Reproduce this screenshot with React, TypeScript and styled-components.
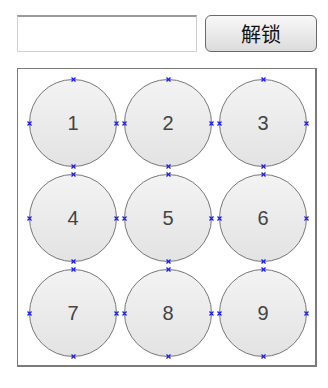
import React from 'react';
import styled, { createGlobalStyle } from 'styled-components';

const GlobalStyle = createGlobalStyle`
	html, body {
		margin: 0;
		padding: 0;
		background: #ffffff;
		font-family: "Liberation Sans", "Noto Sans CJK SC", sans-serif;
	}
`;

const Page = styled.div`
	padding: 15px 0 0 17px;
	width: 300px;
`;

const Toolbar = styled.div`
	display: flex;
	align-items: center;
	gap: 8px;
`;

const PasswordInput = styled.input`
	box-sizing: border-box;
	width: 180px;
	height: 37px;
	margin: 0;
	border: 1px solid #cfcfcf;
	border-top: 2px solid #9a9a9a;
	outline: none;
	background: #ffffff;
`;

const UnlockButton = styled.button`
	box-sizing: border-box;
	width: 112px;
	height: 37px;
	margin: 0;
	border: 1.5px solid #6a6a6a;
	border-radius: 6px;
	background: linear-gradient(#f8f8f8, #dcdcdc);
	color: #111111;
	font-family: "Noto Sans CJK SC", sans-serif;
	font-size: 20px;
	padding: 0;
`;

const LockPanel = styled.div`
	box-sizing: border-box;
	margin-top: 16px;
	width: 300px;
	height: 299px;
	border: 1px solid #7a7a7a;
	border-bottom-width: 2px;
	border-right-width: 2px;
	padding: 10px 0 0 11px;
	display: grid;
	grid-template-columns: repeat(3, 88px);
	grid-auto-rows: 88px;
	column-gap: 7px;
	row-gap: 7px;
	align-content: start;
`;

const Node = styled.div`
	position: relative;
	box-sizing: border-box;
	width: 88px;
	height: 88px;
	border: 1.8px solid #777777;
	border-radius: 50%;
	background: linear-gradient(#f3f3f3, #e3e3e3);
	display: flex;
	align-items: center;
	justify-content: center;
	color: #444444;
	font-size: 20px;
`;

type Side = 'top' | 'bottom' | 'left' | 'right';

const spot: Record<Side, string> = {
	top: 'top: -3px; left: calc(50% - 2.5px);',
	bottom: 'bottom: -3px; left: calc(50% - 2.5px);',
	left: 'left: -3px; top: calc(50% - 2.5px);',
	right: 'right: -3px; top: calc(50% - 2.5px);',
};

const Marker = styled.svg<{ $side: Side }>`
	position: absolute;
	width: 5px;
	height: 5px;
	${(props) => spot[props.$side]}
`;

const Cross = ({ side }: { side: Side }) => (
	<Marker $side={side} viewBox="0 0 5 5">
		<path d="M0.5 0.5 L4.5 4.5 M4.5 0.5 L0.5 4.5" stroke="#1a1aff" strokeWidth="1.3" />
	</Marker>
);

const sides: Side[] = ['top', 'bottom', 'left', 'right'];

const App = () => (
	<>
		<GlobalStyle />
		<Page>
			<Toolbar>
				<PasswordInput type="text" />
				<UnlockButton>解锁</UnlockButton>
			</Toolbar>
			<LockPanel>
				{[1, 2, 3, 4, 5, 6, 7, 8, 9].map((n) => (
					<Node key={n}>
						{n}
						{sides.map((s) => (
							<Cross key={s} side={s} />
						))}
					</Node>
				))}
			</LockPanel>
		</Page>
	</>
);

export default App;
